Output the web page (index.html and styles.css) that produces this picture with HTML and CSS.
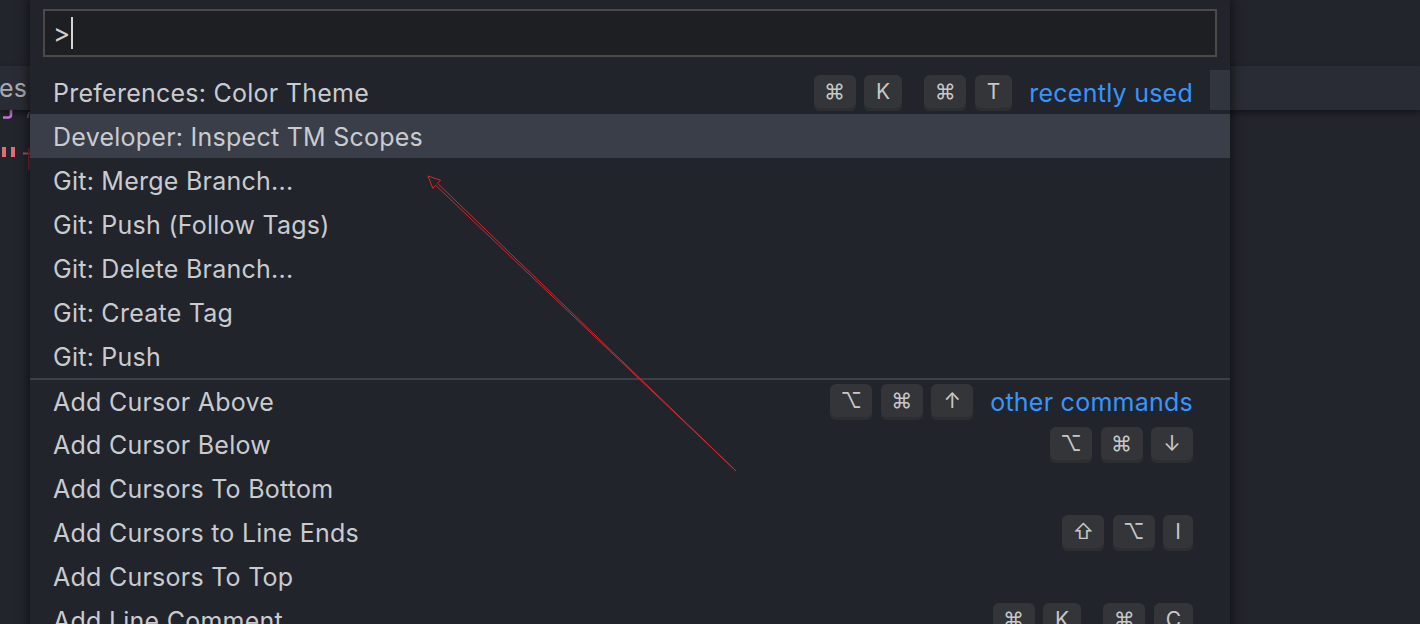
FILE: index.html
```html
<!DOCTYPE html>
<html>
<head>
<meta charset="utf-8">
<link rel="stylesheet" href="styles.css">
</head>
<body>
<div class="editor">
  <div class="top-area"></div>
  <div class="tab-strip"><span class="tab-title">es</span></div>
  <div class="code">
    <div class="code-line line-1">
      <svg width="32" height="14" viewBox="0 0 32 14"><path d="M11 0 V5 Q11 7.5 8 7.5 H3" fill="none" stroke="#c678dd" stroke-width="2.6"/><path d="M29 2 L27.5 8" stroke="#5c6370" stroke-width="1.5"/></svg>
    </div>
    <div class="code-line line-2">
      <svg width="32" height="26" viewBox="0 0 32 26"><rect x="2" y="0" width="4" height="10" fill="#e06c75"/><rect x="11" y="0" width="4" height="10" fill="#e06c75"/><rect x="23" y="5.5" width="7" height="2" fill="#c04a55"/><rect x="28" y="1" width="1.5" height="22" fill="#7a2a32"/></svg>
    </div>
  </div>
</div>

<div class="quick-input">
  <div class="input-wrap">
    <div class="input"><span class="prompt">&gt;</span><span class="caret"></span></div>
  </div>
  <div class="list">
    <div class="row">
      <span class="label">Preferences: Color Theme</span>
      <span class="keys">
        <span class="chord"><kbd class="sym">⌘</kbd><kbd>K</kbd></span>
        <span class="chord"><kbd class="sym">⌘</kbd><kbd>T</kbd></span>
      </span>
      <span class="group">recently used</span>
    </div>
    <div class="row selected"><span class="label">Developer: Inspect TM Scopes</span></div>
    <div class="row"><span class="label">Git: Merge Branch...</span></div>
    <div class="row"><span class="label">Git: Push (Follow Tags)</span></div>
    <div class="row"><span class="label">Git: Delete Branch...</span></div>
    <div class="row"><span class="label">Git: Create Tag</span></div>
    <div class="row"><span class="label">Git: Push</span></div>
    <div class="row separator">
      <span class="label">Add Cursor Above</span>
      <span class="keys"><span class="chord"><kbd class="sym">⌥</kbd><kbd class="sym">⌘</kbd><kbd class="sym">↑</kbd></span></span>
      <span class="group">other commands</span>
    </div>
    <div class="row">
      <span class="label">Add Cursor Below</span>
      <span class="keys"><span class="chord"><kbd class="sym">⌥</kbd><kbd class="sym">⌘</kbd><kbd class="sym">↓</kbd></span></span>
    </div>
    <div class="row"><span class="label">Add Cursors To Bottom</span></div>
    <div class="row">
      <span class="label">Add Cursors to Line Ends</span>
      <span class="keys"><span class="chord"><kbd class="sym">⇧</kbd><kbd class="sym">⌥</kbd><kbd>I</kbd></span></span>
    </div>
    <div class="row"><span class="label">Add Cursors To Top</span></div>
    <div class="row">
      <span class="label">Add Line Comment</span>
      <span class="keys">
        <span class="chord"><kbd class="sym">⌘</kbd><kbd>K</kbd></span>
        <span class="chord"><kbd class="sym">⌘</kbd><kbd>C</kbd></span>
      </span>
    </div>
  </div>
  <div class="scrollbar"></div>
</div>

<svg class="annotation" width="1420" height="624" viewBox="0 0 1420 624">
  <polygon points="428,176 440.5,180.2 437.6,183.3 736,471 435.7,185.3 432.8,188.4" fill="none" stroke="#d8262b" stroke-width="1"/>
</svg>
</body>
</html>
```
FILE: styles.css
```css
html, body {
  margin: 0;
  padding: 0;
  width: 1420px;
  height: 624px;
  overflow: hidden;
  background: #22252c;
  font-family: Inter, "Noto Sans", "DejaVu Sans", sans-serif;
}

.editor {
  display: flex;
  flex-direction: column;
  height: 624px;
}

.top-area {
  height: 66px;
  background: #22252c;
}

.tab-strip {
  height: 44px;
  background: #292c34;
  display: flex;
  align-items: center;
  box-shadow: 0 3px 6px rgba(0, 0, 0, 0.45);
  position: relative;
  z-index: 1;
}

.tab-title {
  color: #a9abb0;
  font-size: 25px;
  letter-spacing: 0.25px;
  line-height: 44px;
  margin-left: -1px;
}

.code {
  display: flex;
  flex-direction: column;
}

.code-line svg {
  display: block;
}

.line-1 {
  height: 37px;
}

.line-2 {
  height: 30px;
}

.quick-input {
  position: absolute;
  left: 30px;
  top: 0;
  width: 1200px;
  height: 640px;
  background: #21242b;
  box-shadow: 0 0 10px 2px rgba(0, 0, 0, 0.55);
  z-index: 2;
}

.input-wrap {
  padding: 9px 13px 13px;
}

.input {
  height: 44px;
  border: 2px solid #4a4a4b;
  background: #1e1f22;
  display: flex;
  align-items: center;
  padding-left: 8px;
  color: #cfcfcf;
  font-size: 26px;
}

.prompt {
  line-height: 32px;
  padding-top: 2px;
}

.caret {
  width: 2px;
  height: 32px;
  background: #d6d6d6;
  margin-left: 1px;
}

.list {
  display: flex;
  flex-direction: column;
}

.row {
  height: 44px;
  box-sizing: border-box;
  display: flex;
  align-items: center;
  padding: 2px 37px 0 23px;
  color: #c9cbcf;
  font-size: 25px;
  letter-spacing: 0.25px;
  white-space: nowrap;
}

.row.selected {
  background: #393e48;
}

.row.separator {
  border-top: 2px solid #3d4047;
  padding-top: 1px;
}

.label {
  flex: 1;
}

.keys {
  display: flex;
  gap: 22px;
}

.chord {
  display: flex;
  gap: 8.5px;
}

kbd {
  box-sizing: border-box;
  height: 36px;
  min-width: 29px;
  padding: 0 12px 3px;
  display: flex;
  align-items: center;
  justify-content: center;
  background: #333539;
  border-radius: 6px;
  box-shadow: inset 0 -3px 0 #2c2e32;
  color: #c8c8c8;
  font-family: Inter, "DejaVu Sans", sans-serif;
  font-size: 21px;
  letter-spacing: 0;
}

kbd.sym {
  width: 42px;
  padding-left: 0;
  padding-right: 0;
}

.group {
  margin-left: 17px;
  color: #3794ff;
}

.scrollbar {
  position: absolute;
  right: 0;
  top: 70px;
  width: 20px;
  height: 40px;
  background: #30353e;
}

.annotation {
  position: absolute;
  left: 0;
  top: 0;
  z-index: 3;
  pointer-events: none;
}
```
